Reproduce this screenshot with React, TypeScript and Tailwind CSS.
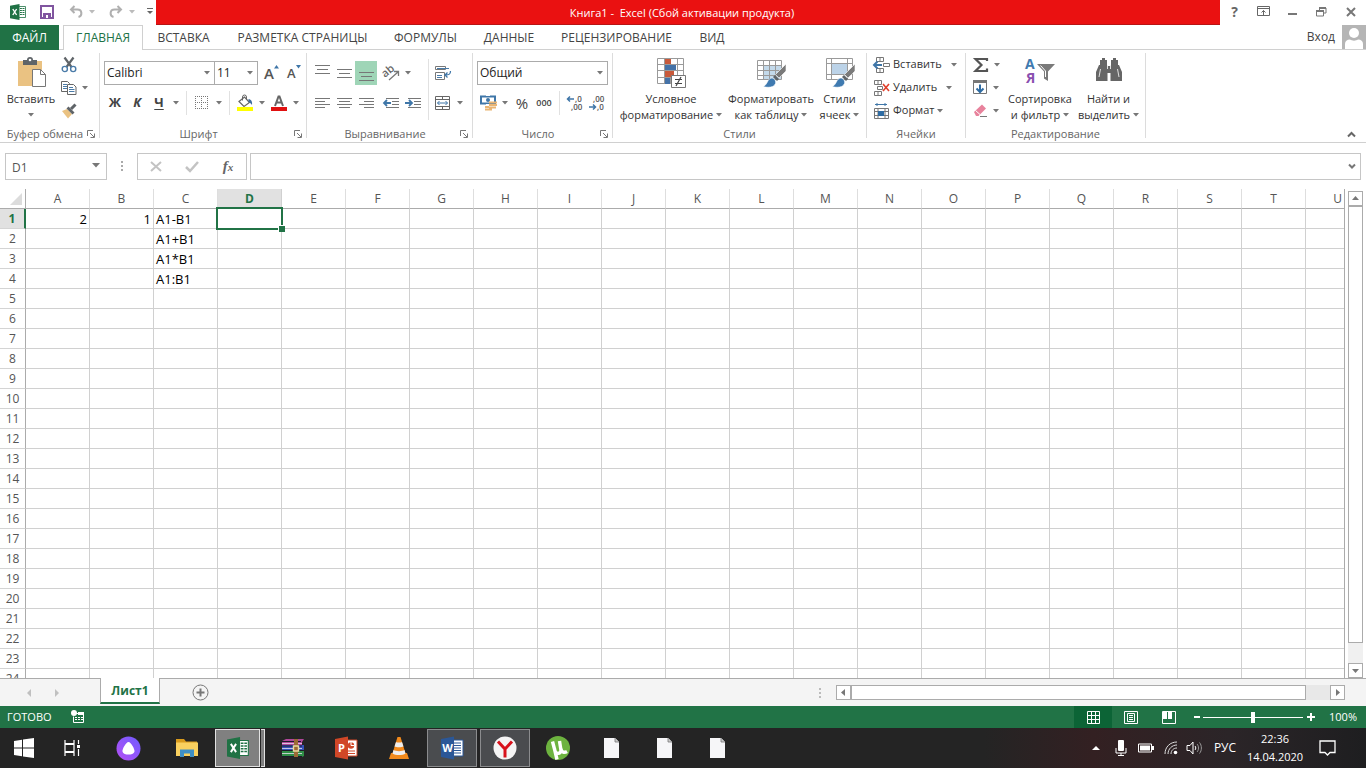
import { useState } from "react";
import type { ReactNode } from "react";

const COLUMNS = "ABCDEFGHIJKLMNOPQRSTU".split("");
const ROWS = Array.from({ length: 24 }, (_, i) => i + 1);

const CELLS: Record<string, string> = {
  A1: "2",
  B1: "1",
  C1: "A1-B1",
  C2: "A1+B1",
  C3: "A1*B1",
  C4: "A1:B1",
};

const TABS = [
  { name: "ВСТАВКА", width: "w-[81px]" },
  { name: "РАЗМЕТКА СТРАНИЦЫ", width: "w-[157px]" },
  { name: "ФОРМУЛЫ", width: "w-[89px]" },
  { name: "ДАННЫЕ", width: "w-[78px]" },
  { name: "РЕЦЕНЗИРОВАНИЕ", width: "w-[137px]" },
  { name: "ВИД", width: "w-[54px]" },
];

type IconProps = { w: number; h: number; children: ReactNode; className?: string };

const Icon = ({ w, h, children, className }: IconProps) => (
  <svg
    width={w}
    height={h}
    viewBox={`0 0 ${w} ${h}`}
    fill="none"
    aria-hidden="true"
    className={`shrink-0 overflow-visible ${className ?? ""}`}
  >
    {children}
  </svg>
);

const Caret = ({ className }: { className?: string }) => (
  <Icon w={6} h={4} className={className}>
    <path d="M0 0h6L3 3.5z" fill="#777" />
  </Icon>
);

const Arrow = ({ label }: { label: string }) => (
  <button aria-label={label} className="flex h-6 w-3 shrink-0 items-center justify-center">
    <Caret />
  </button>
);

type ToolProps = { label: string; children: ReactNode; active?: boolean };

const Tool = ({ label, children, active }: ToolProps) => (
  <button
    aria-label={label}
    className={`flex h-6 w-[22px] shrink-0 items-center justify-center ${active ? "bg-[#9fd5b7]" : ""}`}
  >
    {children}
  </button>
);

const Separator = () => <span className="mx-1 h-6 w-px shrink-0 bg-[#e1e1e1]" />;

type GroupProps = { title: string; width: string; launcher?: boolean; children: ReactNode };

const Group = ({ title, width, launcher, children }: GroupProps) => (
  <section className={`flex shrink-0 ${width}`}>
    <div className="flex min-w-0 flex-1 flex-col">
      <div className="flex h-[73px] px-1">{children}</div>
      <div className="flex h-4 items-center px-[3px] text-[#666]">
        <span className="flex-1 text-center text-[11px] leading-4 whitespace-nowrap">{title}</span>
        {launcher && (
          <button aria-label={`${title}: параметры`} className="mr-px">
            <Icon w={8} h={8}>
              <path d="M.5 6V.5H6M3 3l4 4M7.5 3.500v4h-4" stroke="#777" />
            </Icon>
          </button>
        )}
      </div>
    </div>
    <span className="h-[85px] w-px bg-[#dcdcdc]" />
  </section>
);

/* ---------- ribbon icons ---------- */

const Lines = ({ rows }: { rows: number[][] }) => (
  <Icon w={15} h={16}>
    {rows.map(([x, y, len]) => (
      <path key={y} d={`M${x} ${y}.5h${len}`} stroke="#777" />
    ))}
  </Icon>
);

const PasteIcon = () => (
  <Icon w={30} h={31}>
    <path d="M2 4h24v25H2z" fill="#eac282" />
    <path d="M7 3h4a3 3 0 0 1 6 0h4v5H7z" fill="#5f6468" />
    <circle cx="14" cy="3" r="1.300" fill="#fff" />
    <path d="M16.500 12.500h8l5 5v12h-13z" fill="#fff" stroke="#777" />
    <path d="M24.500 12.500v5h5" stroke="#777" />
  </Icon>
);

const CutIcon = () => (
  <Icon w={16} h={16}>
    <path d="M3.500 0.500 10.500 10M12.500 .5 5.500 10" stroke="#5f6468" strokeWidth="2.200" />
    <circle cx="3.800" cy="12" r="2.600" stroke="#4a7ba8" strokeWidth="1.400" />
    <circle cx="12.200" cy="12" r="2.600" stroke="#4a7ba8" strokeWidth="1.400" />
  </Icon>
);

const CopyIcon = () => (
  <Icon w={16} h={16}>
    <path d="M.5 1.500h6l2 2v8h-8z" fill="#fff" stroke="#666" />
    <path d="M2 4.500h4M2 6.500h4M2 8.500h4" stroke="#4a7ba8" />
    <path d="M6.500 4.500h6l2.500 2.500v7.500h-8.500z" fill="#fff" stroke="#666" />
    <path d="M8 7.500h4M8 9.500h5.500M8 11.500h5.500" stroke="#4a7ba8" />
  </Icon>
);

const PainterIcon = () => (
  <Icon w={16} h={16}>
    <path d="m1 8 5-2 5 5-4 4.500z" fill="#eac282" />
    <path d="m5.500 5.500 2-2 6 6-2 2z" fill="#5f6468" />
    <path d="m10 6 4.500-4.500" stroke="#5f6468" strokeWidth="3" />
  </Icon>
);

const BordersIcon = () => (
  <Icon w={14} h={14}>
    <path d="M.5 0v13M6.500 0v13M12.500 0v13M0 .5h13M0 6.500h13" stroke="#777" strokeDasharray="1 1" />
    <path d="M0 12.500h13" stroke="#777" strokeDasharray="1 1" />
  </Icon>
);

const FillIcon = () => (
  <Icon w={18} h={18}>
    <path d="M3 7.500 8.500 3l5 5.500L8 12.500z" fill="#fff" stroke="#666" strokeWidth="1.200" />
    <path d="M6.500 6.500V3a2 2 0 0 1 4 0v3" stroke="#666" />
    <path d="M12.500 5c3 .5 4 3 3.500 6-1-1.500-2-2.500-3.500-3z" fill="#3f6d9e" />
    <path d="M1 13h16v4H1z" fill="#ffff00" />
  </Icon>
);

const FontColorIcon = () => (
  <Icon w={16} h={18}>
    <path d="m4 12 3.500-9.500h1L12 12M5.500 8.500h5" stroke="#666" strokeWidth="2" />
    <path d="M0 13h16v4H0z" fill="#e01010" />
  </Icon>
);

const OrientIcon = () => (
  <Icon w={18} h={16}>
    <text
      x="3"
      y="13"
      fontSize="11"
      fontWeight="600"
      fill="#666"
      transform="rotate(-40 3 13)"
      fontFamily="Open Sans, sans-serif"
    >
      ab
    </text>
    <path d="m7 15 9-8M12 6.500h4.500V11" stroke="#777" strokeWidth="1.300" />
  </Icon>
);

const IndentIcon = ({ right }: { right?: boolean }) => (
  <Icon w={17} h={12}>
    <path d="M3 1.500h13M9 4.500h7M9 7.500h7M3 10.500h13" stroke="#777" />
    <path
      d={right ? "M0 6h7M4 3l3 3-3 3" : "M1 6h7M4 3 1 6l3 3"}
      stroke="#3f76a8"
      strokeWidth="1.800"
    />
  </Icon>
);

const WrapIcon = () => (
  <Icon w={17} h={16}>
    <path d="M.5 1.500h10v3H.5zM.5 7.500h9v7h-9z" stroke="#777" />
    <path d="M2 3.500h12M2 10.500h5M2 12.500h5" stroke="#4a7ba8" />
    <path d="M15.500 6c0 3-1 4-5 4M12.500 7.500 10 10l2.500 2.500" stroke="#3f76a8" strokeWidth="1.300" />
  </Icon>
);

const MergeIcon = () => (
  <Icon w={16} h={15}>
    <path d="M.5.5h14v13H.5zM.5 3.500h14M.5 10.500h14M7.500.5v3M7.500 10.500v3" stroke="#666" />
    <path d="M2.500 7h10M4.500 5l-2 2 2 2M10.500 5l2 2-2 2" stroke="#3f76a8" />
  </Icon>
);

const CurrencyIcon = () => (
  <Icon w={17} h={16}>
    <path d="M1 1.500h14v7H1z" fill="#fff" stroke="#3f76a8" strokeWidth="2" />
    <path d="M6 0h4v1H6zM6 9h4v1H6z" fill="#fff" />
    <circle cx="8" cy="5" r="2" fill="#3f76a8" />
    <path d="M9 7.500h8M9 10h8M9 12.500h7M5 12h4M5 14.500h7" stroke="#eab573" strokeWidth="1.800" />
  </Icon>
);

const DecimalIcon = ({ less }: { less?: boolean }) => (
  <Icon w={18} h={16}>
    <g fill="#555" fontSize="8" fontWeight="600" fontFamily="Open Sans, sans-serif">
      <text x={less ? 5 : 9} y="7">{less ? ",00" : ",0"}</text>
      <text x={less ? 9 : 5} y="15">{less ? ",0" : ",00"}</text>
    </g>
    {less ? (
      <path d="M1 12h6M5 9.500 7.500 12 5 14.500" stroke="#3f76a8" strokeWidth="1.500" />
    ) : (
      <path d="M2 4h6M4 1.500 1.500 4 4 6.500" stroke="#3f76a8" strokeWidth="1.500" />
    )}
  </Icon>
);

const ConditionalIcon = () => (
  <Icon w={32} h={32}>
    <path
      d="M2.500 1.500h26v25h-26zM2.500 7.500h26M2.500 13.500h26M2.500 20.500h26M9.500 1.500v25M15.500 1.500v25M22.500 1.500v25"
      stroke="#9a9a9a"
    />
    <path d="M10 2h6v5h-6zM10 14h9v6h-9z" fill="#c8593a" />
    <path d="M10 8h11v5H10zM10 21h5v6h-5z" fill="#4472a8" />
    <path d="M16.500 18.500h14v12h-14z" fill="#fff" stroke="#777" />
    <path d="M20 22.500h7M20 26.500h7M26 20l-5 9" stroke="#444" strokeWidth="1.200" />
  </Icon>
);

const Brush = () => (
  <>
    <path d="M31 7v7l-7 7-3.500-3.500z" fill="#7a7a7a" stroke="#fff" strokeWidth=".6" />
    <path d="m20 18 4 4-2 2-4-4z" fill="#5f6468" />
    <path
      d="M8 29.500c4-1 4-6 7-8 3-1.500 6.500 1.500 5.500 5-1.500 4-7.500 4.500-12.500 3z"
      fill="#3f7ab0"
      stroke="#fff"
      strokeWidth=".6"
    />
  </>
);

const FormatTableIcon = () => (
  <Icon w={32} h={32}>
    <path d="M8 9h18v13H8z" fill="#c3d9ea" />
    <path
      d="M2.500 3.500h24v19h-24zM2.500 8.500h24M2.500 13.500h24M2.500 18.500h24M8.500 3.500v19M14.500 3.500v19M20.500 3.500v19"
      stroke="#9a9a9a"
    />
    <Brush />
  </Icon>
);

const CellStylesIcon = () => (
  <Icon w={32} h={32}>
    <path d="M2.500 1.500h26v21h-26zM2.500 6.500h26M2.500 17.500h26M7.500 1.500v21M23.500 1.500v21" stroke="#9a9a9a" />
    <path d="M8 7h15v10H8z" fill="#bcd3e8" />
    <Brush />
  </Icon>
);

const InsertCellsIcon = () => (
  <Icon w={16} h={16}>
    <path d="M2.500.5h7v4h-7zM6 .5v4M2.500 11.500h7v4h-7zM6 11.500v4M9.500 6.500h6v3h-6z" stroke="#777" />
    <path d="M0 8h8M3.500 4.500 0 8l3.500 3.500" stroke="#3f76a8" strokeWidth="2" />
  </Icon>
);

const DeleteCellsIcon = () => (
  <Icon w={16} h={16}>
    <path d="M.5.5h7v4h-7zM4 .5v4M.5 11.500h7v4h-7zM4 11.500v4M3.500 6.500h5v3h-5z" stroke="#777" />
    <path d="m9 4 6 7M15 4l-6 7" stroke="#e0402c" strokeWidth="1.600" />
  </Icon>
);

const FormatCellsIcon = () => (
  <Icon w={16} h={16}>
    <path d="M1 1.500h12M3 0v3M11 0v3" stroke="#3f76a8" />
    <path d="M.5 5.500h14v10H.5zM.5 8.500h14M.5 12.500h14M4 5.500v10M11 5.500v10" stroke="#777" />
    <path d="M4 8h6v5H4z" fill="#2f6ca3" />
  </Icon>
);

const SumIcon = () => (
  <Icon w={16} h={16}>
    <path d="M14 4V2H2.500L8.500 8l-6 6H14v-2.500" stroke="#555" strokeWidth="2.200" />
  </Icon>
);

const FillDownIcon = () => (
  <Icon w={15} h={15}>
    <path d="M.5.5h13v13H.5z" stroke="#777" />
    <path d="M0 0h14v3H0z" fill="#777" />
    <path d="M7 4.500V12M3.500 8.500 7 12l3.500-3.500" stroke="#2f6ca3" strokeWidth="2" />
  </Icon>
);

const EraserIcon = () => (
  <Icon w={15} h={15}>
    <path d="m1 9 8-7.500 4 4-7.500 7.500H3z" fill="#e8829c" />
    <path d="M2.500 7.500l4.500 4" stroke="#fff" />
    <path d="M7 13.500h7" stroke="#777" />
  </Icon>
);

const SortFilterIcon = () => (
  <Icon w={30} h={28}>
    <g fontSize="14" fontWeight="700" fontFamily="Open Sans, sans-serif">
      <text x="0" y="12" fill="#3f7ab0">А</text>
      <text x="1" y="26" fill="#8a4fb0">Я</text>
    </g>
    <path d="M12 7h18l-7 7.500V24l-4-2.500v-7z" fill="#7a7a7a" />
    <path d="m15.500 8.500 5 5.500v6" stroke="#fff" />
  </Icon>
);

const BinocularsIcon = () => (
  <Icon w={28} h={26}>
    <path
      d="M5 3h2V1h3v2h2v8H5zM16 3h2V1h3v2h2v8h-7zM4 8h8.500v16H1V15zM15.500 8H24l3 7v9H15.500zM11 9h6v7h-6z"
      fill="#666"
    />
    <path d="M5.500 12 4 20M22.500 12l1.500 8M12.500 4v8M15.500 4v8" stroke="#fff" strokeWidth=".8" />
  </Icon>
);

/* ---------- app icons ---------- */

const ExcelIcon = ({ size }: { size: number }) => (
  <svg width={size} height={size} viewBox="0 0 16 16" fill="none" aria-hidden="true" className="shrink-0">
    <path d="M8.500 2.500h7v11h-7z" fill="#fff" stroke="#207245" strokeWidth=".8" />
    <path d="M10 4.500h4.500M10 6.500h4.500M10 8.500h4.500M10 10.500h4.500" stroke="#207245" strokeWidth="1" />
    <path d="M12.300 3v10" stroke="#fff" strokeWidth=".6" />
    <path d="M0 1.800 9.500 0v16L0 14.200z" fill="#207245" />
    <path d="m2.800 5 3.800 6M6.600 5l-3.800 6" stroke="#fff" strokeWidth="1.400" />
  </svg>
);

const OfficeIcon = ({ color, letter }: { color: string; letter: string }) => (
  <Icon w={24} h={24}>
    <path d="M12 4h11v16H12z" fill="#fff" stroke={color} />
    {letter === "W" ? (
      <path d="M14 7h7M14 9.500h7M14 12h7M14 14.500h7M14 17h7" stroke={color} strokeWidth="1.200" />
    ) : (
      <>
        <circle cx="17" cy="9.500" r="3.200" fill={color} />
        <path d="M17 9.500V6M17 9.500h3.500" stroke="#fff" />
        <path d="M14 15h7M14 17.500h7" stroke={color} strokeWidth="1.200" />
      </>
    )}
    <path d="M1 3 14 .5v23L1 21z" fill={color} />
    <text
      x="7.500"
      y="16"
      textAnchor="middle"
      fontSize="11"
      fontWeight="700"
      fill="#fff"
      fontFamily="Open Sans, sans-serif"
    >
      {letter}
    </text>
  </Icon>
);

const WinRarIcon = () => (
  <Icon w={24} h={20}>
    <path d="M1 3 5 1h18l-2 3v4H1z" fill="#b0479a" />
    <path d="M1 7h22v5H1z" fill="#3552b8" />
    <path d="M1 13h22v5l-2 1H1z" fill="#2f8f46" />
    <path d="M1 3.500h19M1 8h20M1 12.500h21M1 18.500h20" stroke="#1b1b2b" />
    <path d="M1 5.500h20M1 10.500h20M1 15.500h20" stroke="#e6dff0" strokeWidth=".8" />
    <path d="M13 1h4v18h-4z" fill="#9b6a35" />
    <path d="M12.500 8h5v5h-5z" stroke="#e8d9a0" strokeWidth="1.400" />
  </Icon>
);

const VlcIcon = () => (
  <Icon w={22} h={24}>
    <path d="M3 17h16l2 6H1z" fill="#f28a1c" />
    <path d="M9.500 1h3L18 19c-3 2.500-11 2.500-14 0z" fill="#f28a1c" />
    <path
      d="m8 6-1.500 4.500c2 1 7 1 9 0L14 6c-1 .8-5 .8-6 0zM5.500 14l-1 3.500c3 2 10 2 13 0l-1-3.500c-2 1.500-9 1.500-11 0z"
      fill="#eee"
    />
  </Icon>
);

const YandexIcon = () => (
  <Icon w={24} h={24}>
    <circle cx="12" cy="12" r="11.500" fill="#f4f4f4" />
    <path d="m5 5.500 7 7.500 7-7.500M12 12.500V21.500" stroke="#d8121c" strokeWidth="3" />
  </Icon>
);

const TorrentIcon = () => (
  <Icon w={26} h={26}>
    <circle cx="13" cy="13" r="12" fill="#6db33f" />
    <path
      d="M7.500 6.500 10 16c1 3.500 5.500 3 6-.5L14.500 6M16 14c.5 3.500 3.500 4 6 2.500M9.500 14l2.500 10.500"
      stroke="#fff"
      strokeWidth="3.400"
    />
  </Icon>
);

const ExplorerIcon = () => (
  <Icon w={24} h={20}>
    <path d="M1 1h8l2 2.500h11V6H1z" fill="#d99b1c" />
    <path d="M1 4.500h22V18H1z" fill="#fad15f" />
    <path d="M5 19v-7.500h14V19h-4v-3.500H9V19z" fill="#3f8fc4" />
  </Icon>
);

const AliceIcon = () => (
  <Icon w={25} h={25}>
    <defs>
      <linearGradient id="alice" x1="0" y1="1" x2="1" y2="0">
        <stop offset="0" stopColor="#b44ff5" />
        <stop offset="1" stopColor="#6f5cff" />
      </linearGradient>
    </defs>
    <circle cx="12.500" cy="12.500" r="12" fill="url(#alice)" />
    <path
      d="M12.500 6c2.500 0 6.500 7.500 6 9.500-.6 2.500-3.500 3-6 3s-5.400-.5-6-3C6 13.500 10 6 12.500 6z"
      fill="#fff"
    />
  </Icon>
);

const FileIcon = () => (
  <Icon w={17} h={22}>
    <path d="M1 1h11l4 4v16H1z" fill="#f6f6f8" />
    <path d="M12 1v4h4" fill="#ccc" stroke="#777" strokeWidth=".8" />
  </Icon>
);

const TASKS = [
  { name: "Excel", icon: <ExcelIcon size={22} />, style: "border border-[#e2e2e2] bg-[#808080]" },
  { name: "WinRAR", icon: <WinRarIcon />, style: "" },
  { name: "PowerPoint", icon: <OfficeIcon color="#d04727" letter="P" />, style: "" },
  { name: "VLC", icon: <VlcIcon />, style: "" },
  { name: "Word", icon: <OfficeIcon color="#2b5797" letter="W" />, style: "border border-[#8b8c8e] bg-[#4a4c4f]" },
  { name: "Yandex", icon: <YandexIcon />, style: "border border-[#8b8c8e] bg-[#4a4c4f]" },
  { name: "uTorrent", icon: <TorrentIcon />, style: "" },
  { name: "Файл 1", icon: <FileIcon />, style: "" },
  { name: "Файл 2", icon: <FileIcon />, style: "" },
  { name: "Файл 3", icon: <FileIcon />, style: "" },
];

/* ---------- sections ---------- */

const TitleBar = () => (
  <header className="flex h-[25px] shrink-0">
    <div className="flex w-[156px] shrink-0 items-center pb-[2px] pl-[10px]">
      <ExcelIcon size={16} />
      <button aria-label="Сохранить" className="ml-[14px]">
        <Icon w={14} h={14}>
          <path d="M1 1h12v12H1z" stroke="#80559f" strokeWidth="2" />
          <path d="M3 8h8v5H3z" fill="#80559f" />
          <path d="M6 10h2v3H6z" fill="#fff" />
        </Icon>
      </button>
      <button aria-label="Отменить" className="ml-[15px] flex items-center gap-[6px]">
        <Icon w={14} h={13}>
          <path d="M5.500 1 2 4.500 5.500 8M2 4.500h6.500c5 0 5 6.500 1 7.500" stroke="#b0b0b0" strokeWidth="2" />
        </Icon>
        <Caret className="opacity-50" />
      </button>
      <button aria-label="Вернуть" className="ml-[14px] flex items-center gap-[6px]">
        <Icon w={14} h={13}>
          <path d="M8.500 1 12 4.500 8.500 8M12 4.500H5.500c-5 0-5 6.500-1 7.500" stroke="#b0b0b0" strokeWidth="2" />
        </Icon>
        <Caret className="opacity-50" />
      </button>
      <button aria-label="Настройка панели" className="ml-3">
        <Icon w={6} h={7}>
          <path d="M0 .5h6" stroke="#666" />
          <path d="M0 3h6L3 6z" fill="#666" />
        </Icon>
      </button>
    </div>
    <h1 className="flex-1 border-b border-[#b81414] bg-[#ea1111] pr-3 text-center text-[11px] leading-[25px] whitespace-pre text-white">
      {"Книга1 -  Excel (Сбой активации продукта)"}
    </h1>
    <div className="flex w-[146px] shrink-0 items-center pb-[2px]">
      <button aria-label="Справка" className="w-[29px] text-[14px] font-bold text-[#666]">
        ?
      </button>
      <button aria-label="Параметры ленты" className="flex w-[29px] justify-center">
        <Icon w={14} h={11}>
          <path d="M.5.5h12v9H.5zM.5 2.500h12M6.500 9V4.500M4.500 6.500l2-2 2 2" stroke="#666" />
        </Icon>
      </button>
      <button aria-label="Свернуть" className="flex w-[29px] justify-center pt-1">
        <Icon w={9} h={2}>
          <path d="M0 1h9" stroke="#777" strokeWidth="2" />
        </Icon>
      </button>
      <button aria-label="Восстановить" className="flex w-[29px] justify-center">
        <Icon w={11} h={10}>
          <path d="M3.500 3V1h6.500v5H8" stroke="#777" />
          <path d="M.5 4h7v5h-7z" stroke="#777" />
          <path d="M0 4h8M3 1h7" stroke="#777" strokeWidth="2" />
        </Icon>
      </button>
      <button aria-label="Закрыть" className="flex w-[29px] justify-center">
        <Icon w={10} h={10}>
          <path d="m1 1 8 8M9 1 1 9" stroke="#777" strokeWidth="2" />
        </Icon>
      </button>
    </div>
  </header>
);

const RibbonTabs = () => (
  <nav className="flex h-[25px] shrink-0 border-b border-[#d0d0d0] text-[12px] text-[#444]">
    <button className="h-[25px] w-[59px] shrink-0 bg-[#207245] text-white">ФАЙЛ</button>
    <button className="ml-1 h-[25px] w-20 shrink-0 border border-b-0 border-[#d0d0d0] bg-white text-[#207245]">
      ГЛАВНАЯ
    </button>
    {TABS.map((tab) => (
      <button key={tab.name} className={`h-[25px] shrink-0 whitespace-nowrap ${tab.width}`}>
        {tab.name}
      </button>
    ))}
    <div className="flex-1" />
    <a href="#login" className="mr-[7px] text-[12px] leading-6">
      Вход
    </a>
    <Icon w={24} h={24}>
      <path d="M0 0h24v24H0z" fill="#b5b5b5" />
      <circle cx="12" cy="8" r="5" fill="#fff" />
      <path d="M3 24v-5c0-3 2-4.500 5-4.500 2 1.500 6 1.500 8 0 3 0 5 1.500 5 4.500v5z" fill="#fff" />
    </Icon>
  </nav>
);

type BigToolProps = { width: string; icon: ReactNode; lines: string[] };

const BigTool = ({ width, icon, lines }: BigToolProps) => (
  <button className={`flex shrink-0 flex-col items-center pt-1 text-[11px] leading-4 text-[#333] ${width}`}>
    <span className="flex h-[34px] shrink-0">{icon}</span>
    <span className="whitespace-nowrap">{lines[0]}</span>
    <span className="flex h-4 items-center gap-[3px] whitespace-nowrap">
      {lines[1]}
      <Caret />
    </span>
  </button>
);

const CELL_TOOLS = [
  { name: "Вставить", icon: <InsertCellsIcon />, gap: "gap-[9px]" },
  { name: "Удалить", icon: <DeleteCellsIcon />, gap: "gap-[9px]" },
  { name: "Формат", icon: <FormatCellsIcon />, gap: "gap-[3px]" },
];

const EDIT_TOOLS = [
  { name: "Сумма", icon: <SumIcon /> },
  { name: "Заполнить", icon: <FillDownIcon /> },
  { name: "Очистить", icon: <EraserIcon /> },
];

const Ribbon = () => (
  <div className="flex h-[93px] shrink-0 border-b border-[#d0d0d0] pt-[3px]">
    <Group title="Буфер обмена" width="w-[100px]" launcher>
      <BigTool width="w-[54px]" icon={<PasteIcon />} lines={["Вставить", ""]} />
      <div className="flex flex-col pl-[3px]">
        <button aria-label="Вырезать" className="flex h-[23px] items-center">
          <CutIcon />
        </button>
        <button aria-label="Копировать" className="flex h-[23px] items-center gap-[5px]">
          <CopyIcon />
          <Caret />
        </button>
        <button aria-label="Формат по образцу" className="flex h-[23px] items-center">
          <PainterIcon />
        </button>
      </div>
    </Group>

    <Group title="Шрифт" width="w-[207px]" launcher>
      <div className="flex flex-col gap-[6px] pt-2">
        <div className="flex items-center text-[12px] text-[#222]">
          <label className="relative h-6 w-[111px] border border-[#ababab]">
            <select aria-label="Шрифт" className="h-full w-full appearance-none pl-[2px] leading-5">
              <option>Calibri</option>
            </select>
            <Caret className="pointer-events-none absolute top-[9px] right-1" />
          </label>
          <label className="relative h-6 w-[43px] border border-l-0 border-[#ababab]">
            <select aria-label="Размер" className="h-full w-full appearance-none pl-[2px] leading-5">
              <option>11</option>
            </select>
            <Caret className="pointer-events-none absolute top-[9px] right-1" />
          </label>
          <button aria-label="Увеличить" className="ml-[6px] flex w-[23px] items-start text-[#555]">
            <span className="text-[15px] leading-6 font-semibold">A</span>
            <Icon w={4} h={4} className="mt-1">
              <path d="M0 3.500h5L2.500 0z" fill="#3f76a8" />
            </Icon>
          </button>
          <button aria-label="Уменьшить" className="flex items-start text-[#555]">
            <span className="text-[13px] leading-6 font-semibold">A</span>
            <Icon w={4} h={4} className="mt-1">
              <path d="M0 0h5L2.500 3.500z" fill="#3f76a8" />
            </Icon>
          </button>
        </div>
        <div className="flex items-center text-[13px] font-bold text-[#444]">
          <Tool label="Полужирный">Ж</Tool>
          <Tool label="Курсив">
            <i>К</i>
          </Tool>
          <Tool label="Подчеркнутый">
            <u className="underline-offset-2">Ч</u>
          </Tool>
          <Arrow label="Варианты подчеркивания" />
          <Separator />
          <Tool label="Границы">
            <BordersIcon />
          </Tool>
          <Arrow label="Варианты границ" />
          <Separator />
          <Tool label="Цвет заливки">
            <FillIcon />
          </Tool>
          <Arrow label="Варианты заливки" />
          <Tool label="Цвет текста">
            <FontColorIcon />
          </Tool>
          <Arrow label="Варианты цвета" />
        </div>
      </div>
    </Group>

    <Group title="Выравнивание" width="w-[166px]" launcher>
      <div className="flex w-[114px] flex-col gap-[6px] pt-2">
        <div className="flex">
          <Tool label="По верхнему краю">
            <Lines rows={[[0, 0, 15], [2, 4, 11], [0, 8, 15]]} />
          </Tool>
          <Tool label="По середине">
            <Lines rows={[[0, 4, 15], [2, 8, 11], [0, 12, 15]]} />
          </Tool>
          <Tool label="По нижнему краю" active>
            <Lines rows={[[0, 7, 15], [2, 11, 11], [0, 15, 15]]} />
          </Tool>
          <span className="w-[3px]" />
          <Tool label="Ориентация">
            <OrientIcon />
          </Tool>
          <Arrow label="Варианты ориентации" />
        </div>
        <div className="flex">
          <Tool label="По левому краю">
            <Lines rows={[[0, 3, 15], [0, 6, 10], [0, 9, 15], [0, 12, 10]]} />
          </Tool>
          <Tool label="По центру">
            <Lines rows={[[0, 3, 15], [2, 6, 11], [0, 9, 15], [2, 12, 11]]} />
          </Tool>
          <Tool label="По правому краю">
            <Lines rows={[[0, 3, 15], [5, 6, 10], [0, 9, 15], [5, 12, 10]]} />
          </Tool>
          <span className="w-[3px]" />
          <Tool label="Уменьшить отступ">
            <IndentIcon />
          </Tool>
          <Tool label="Увеличить отступ">
            <IndentIcon right />
          </Tool>
        </div>
      </div>
      <div className="my-[6px] ml-[3px] flex flex-col gap-[6px] border-l border-[#e1e1e1] pt-[2px] pl-[3px]">
        <Tool label="Перенос текста">
          <WrapIcon />
        </Tool>
        <div className="flex">
          <Tool label="Объединить">
            <MergeIcon />
          </Tool>
          <Arrow label="Варианты объединения" />
        </div>
      </div>
    </Group>

    <Group title="Число" width="w-[140px]" launcher>
      <div className="flex flex-1 flex-col gap-[6px] pt-2">
        <label className="relative h-6 border border-[#ababab] text-[12px] text-[#222]">
          <select aria-label="Числовой формат" className="h-full w-full appearance-none pl-[2px] leading-5">
            <option>Общий</option>
          </select>
          <Caret className="pointer-events-none absolute top-[9px] right-1" />
        </label>
        <div className="flex items-center text-[#444]">
          <Tool label="Финансовый формат">
            <CurrencyIcon />
          </Tool>
          <Arrow label="Варианты валюты" />
          <Tool label="Процентный формат">
            <span className="text-[15px]">%</span>
          </Tool>
          <Tool label="Формат с разделителями">
            <span className="text-[9px] font-semibold">000</span>
          </Tool>
          <Separator />
          <Tool label="Увеличить разрядность">
            <DecimalIcon />
          </Tool>
          <Tool label="Уменьшить разрядность">
            <DecimalIcon less />
          </Tool>
        </div>
      </div>
    </Group>

    <Group title="Стили" width="w-[254px]">
      <BigTool width="w-[108px]" icon={<ConditionalIcon />} lines={["Условное", "форматирование"]} />
      <BigTool width="w-[92px]" icon={<FormatTableIcon />} lines={["Форматировать", "как таблицу"]} />
      <BigTool width="w-[45px]" icon={<CellStylesIcon />} lines={["Стили", "ячеек"]} />
    </Group>

    <Group title="Ячейки" width="w-[99px]">
      <div className="flex flex-col pl-[3px] text-[11px] text-[#333]">
        {CELL_TOOLS.map((tool) => (
          <button key={tool.name} className={`flex h-[23px] items-center ${tool.gap}`}>
            <span className="flex items-center gap-[3px]">
              {tool.icon}
              {tool.name}
            </span>
            <Caret />
          </button>
        ))}
      </div>
    </Group>

    <Group title="Редактирование" width="w-[180px]">
      <div className="flex w-[34px] flex-col pl-[3px]">
        {EDIT_TOOLS.map((tool) => (
          <button key={tool.name} aria-label={tool.name} className="flex h-[23px] items-center gap-[5px]">
            {tool.icon}
            <Caret />
          </button>
        ))}
      </div>
      <BigTool width="w-[72px]" icon={<SortFilterIcon />} lines={["Сортировка", "и фильтр"]} />
      <BigTool width="w-[65px]" icon={<BinocularsIcon />} lines={["Найти и", "выделить"]} />
    </Group>

    <div className="flex flex-1 items-end justify-end pr-[10px] pb-1">
      <button aria-label="Свернуть ленту">
        <Icon w={9} h={7}>
          <path d="m1 5.500 3.500-3.500L8 5.500" stroke="#666" strokeWidth="2" />
        </Icon>
      </button>
    </div>
  </div>
);

const FormulaBar = () => {
  const [formula, setFormula] = useState("");

  return (
    <div className="flex h-[46px] shrink-0 items-center px-[5px]">
      <label className="relative h-[27px] w-[102px] shrink-0 border border-[#c6c6c6]">
        <input
          aria-label="Имя"
          defaultValue="D1"
          className="h-full w-full px-[6px] text-[12px] text-[#555] outline-none"
        />
        <Icon w={8} h={5} className="pointer-events-none absolute top-[9px] right-[6px]">
          <path d="M0 0h8L4 4.500z" fill="#777" />
        </Icon>
      </label>
      <Icon w={30} h={14}>
        <path d="M14 2h2v2h-2zM14 6h2v2h-2zM14 10h2v2h-2z" fill="#aaa" />
      </Icon>
      <div className="flex h-[27px] w-[110px] shrink-0 items-center border border-[#c6c6c6]">
        <button aria-label="Отмена" className="flex w-9 justify-center">
          <Icon w={12} h={11}>
            <path d="m1 1 10 9M11 1 1 10" stroke="#c3c3c3" strokeWidth="2" />
          </Icon>
        </button>
        <button aria-label="Ввод" className="flex w-9 justify-center">
          <Icon w={14} h={11}>
            <path d="m1 6 4 4 8-9" stroke="#c3c3c3" strokeWidth="2.500" />
          </Icon>
        </button>
        <button
          aria-label="Вставить функцию"
          className="w-9 font-['Liberation_Serif',serif] text-[15px] font-bold text-[#666] italic"
        >
          f<span className="text-[11px]">x</span>
        </button>
      </div>
      <div className="ml-[3px] flex h-[27px] flex-1 items-center border border-[#c6c6c6] pr-1">
        <input
          aria-label="Строка формул"
          value={formula}
          onChange={(e) => { setFormula(e.target.value); }}
          className="h-full flex-1 px-1 text-[13px] outline-none"
        />
        <button aria-label="Развернуть строку формул">
          <Icon w={8} h={7}>
            <path d="m1 1.500 3 3 3-3" stroke="#777" strokeWidth="2" />
          </Icon>
        </button>
      </div>
    </div>
  );
};

const Sheet = () => (
  <div className="min-w-0 flex-1 overflow-hidden border-r border-[#ababab]">
    <table className="w-[1370px] table-fixed border-separate border-spacing-0">
      <thead>
        <tr className="h-5 text-[12px] leading-[18px] text-[#555]">
          <th className="w-[26px] border-r border-b border-[#ababab] p-0">
            <Icon w={13} h={13} className="ml-[9px]">
              <path d="M13 1v12H1z" fill="#dcdcdc" />
            </Icon>
          </th>
          {COLUMNS.map((col) => (
            <th
              key={col}
              scope="col"
              className={
                col === "D"
                  ? "w-16 border-r border-b border-r-[#d0d0d0] border-b-[#217346] bg-[#e1e1e1] p-0 font-bold text-[#217346]"
                  : "w-16 border-r border-b border-r-[#dedede] border-b-[#ababab] p-0 font-normal"
              }
            >
              {col}
            </th>
          ))}
        </tr>
      </thead>
      <tbody>
        {ROWS.map((row) => (
          <tr key={row} className="h-5 text-[13px] leading-[18px] text-black">
            <th
              scope="row"
              className={
                row === 1
                  ? "border-r-2 border-b border-r-[#217346] border-b-[#d4d4d4] bg-[#e1e1e1] p-0 text-[12px] font-bold text-[#217346]"
                  : "border-r border-b border-r-[#ababab] border-b-[#d4d4d4] p-0 text-[12px] font-normal text-[#555]"
              }
            >
              {row}
            </th>
            {COLUMNS.map((col) => {
              const id = `${col}${row}`;
              const numeric = col === "A" || col === "B";
              return (
                <td
                  key={id}
                  className={`relative border-r border-b border-[#d0d0d0] px-[2px] py-0 ${numeric ? "text-right" : ""}`}
                >
                  {CELLS[id]}
                  {id === "D1" && (
                    <span className="absolute -inset-[2px] z-10 border-2 border-[#217346]">
                      <span className="absolute -right-1 -bottom-1 size-[7px] border-t border-l border-white bg-[#217346]" />
                    </span>
                  )}
                </td>
              );
            })}
          </tr>
        ))}
      </tbody>
    </table>
  </div>
);

const ScrollButton = ({ label, d }: { label: string; d: string }) => (
  <button
    aria-label={label}
    className="flex size-[15px] shrink-0 items-center justify-center border border-[#ababab] bg-white"
  >
    <Icon w={7} h={7}>
      <path d={d} fill="#777" />
    </Icon>
  </button>
);

const SheetTabs = () => (
  <div className="flex h-7 shrink-0 border-t border-[#ababab] bg-[#f4f4f4]">
    <div className="flex w-[100px] shrink-0 items-center gap-[23px] pl-[27px]">
      <button aria-label="Предыдущий лист">
        <Icon w={5} h={8}>
          <path d="M4 0v8L0 4z" fill="#c0c0c0" />
        </Icon>
      </button>
      <button aria-label="Следующий лист">
        <Icon w={5} h={8}>
          <path d="M0 0v8l4-4z" fill="#c0c0c0" />
        </Icon>
      </button>
    </div>
    <button className="-mt-px h-[26px] w-[60px] shrink-0 border-x border-b-2 border-x-[#ababab] border-b-[#217346] bg-white pt-[2px] text-[12px] font-bold text-[#217346]">
      Лист1
    </button>
    <button aria-label="Новый лист" className="ml-8 flex items-center">
      <Icon w={17} h={17}>
        <circle cx="8.500" cy="8.500" r="7.500" stroke="#777" />
        <path d="M8.500 4.500v8M4.500 8.500h8" stroke="#777" strokeWidth="2" />
      </Icon>
    </button>
    <div className="flex-1" />
    <div className="flex w-[548px] shrink-0 items-center pr-[21px]">
      <Icon w={18} h={12}>
        <path d="M1 1h2v2H1zM1 5h2v2H1zM1 9h2v2H1z" fill="#bbb" />
      </Icon>
      <ScrollButton label="Влево" d="M5 0v7L1 3.500z" />
      <div className="flex h-[15px] flex-1 bg-[#e8e8e8] pr-6">
        <div className="flex-1 border border-[#ababab] bg-white" />
      </div>
      <ScrollButton label="Вправо" d="M2 0v7l4-3.500z" />
    </div>
  </div>
);

const StatusBar = () => {
  const [zoom, setZoom] = useState(50);

  return (
    <footer className="flex h-[22px] shrink-0 items-center bg-[#217346] text-[11px] text-white">
      <span className="w-[71px] shrink-0 pl-[7px]">ГОТОВО</span>
      <Icon w={14} h={14}>
        <path d="M4.500 3.500h8v9h-10v-6" stroke="#fff" />
        <path d="M7 2h6v3H7zM4 7h2v1H4zM7 7h2v1H7zM10 7h2v1h-2zM4 9h2v1H4zM7 9h2v1H7zM10 9h2v1h-2z" fill="#fff" />
        <circle cx="3" cy="3" r="3" fill="#fff" />
      </Icon>
      <div className="flex-1" />
      <button aria-label="Обычный" className="flex h-full w-[38px] items-center justify-center bg-[#0c6436]">
        <Icon w={13} h={13}>
          <path d="M.5.5h12v12H.5zM.5 4.500h12M.5 8.500h12M4.500.5v12M8.500.5v12" stroke="#fff" />
        </Icon>
      </button>
      <button aria-label="Разметка страницы" className="flex h-full w-[38px] items-center justify-center">
        <Icon w={14} h={13}>
          <path d="M.5.5h13v12H.5zM3.500 2.500h7v8h-7zM5 4.500h4M5 6.500h4M5 8.500h4" stroke="#fff" />
        </Icon>
      </button>
      <button aria-label="Страничный" className="flex h-full w-[38px] items-center justify-center">
        <Icon w={14} h={13}>
          <path d="M.5.5h13v12H.5z" stroke="#fff" />
          <path d="M1 1h4v7H1zM6 1h4v7H6z" fill="#fff" />
        </Icon>
      </button>
      <button aria-label="Уменьшить масштаб" className="ml-[2px] flex w-[13px] justify-center">
        <Icon w={6} h={2}>
          <path d="M0 0h6v2H0z" fill="#fff" />
        </Icon>
      </button>
      <input
        type="range"
        aria-label="Масштаб"
        value={zoom}
        onChange={(e) => { setZoom(Number(e.target.value)); }}
        className="h-3 w-[100px] appearance-none bg-transparent [&::-webkit-slider-runnable-track]:h-px [&::-webkit-slider-runnable-track]:bg-white [&::-webkit-slider-thumb]:-mt-[5px] [&::-webkit-slider-thumb]:h-[11px] [&::-webkit-slider-thumb]:w-1 [&::-webkit-slider-thumb]:appearance-none [&::-webkit-slider-thumb]:bg-white"
      />
      <button aria-label="Увеличить масштаб" className="flex w-4 justify-center">
        <Icon w={8} h={8}>
          <path d="M4 0v8M0 4h8" stroke="#fff" strokeWidth="2" />
        </Icon>
      </button>
      <span className="w-[47px] shrink-0 pr-[9px] text-right">100%</span>
    </footer>
  );
};

const Taskbar = () => (
  <div className="flex h-10 shrink-0 items-center bg-[linear-gradient(90deg,#242424_72%,#332022_80%,#2b2528_90%,#1e1e20_100%)] text-white">
    <button aria-label="Пуск" className="flex w-12 justify-center">
      <Icon w={20} h={20}>
        <path d="M0 3l8-1.200V9.500H0zM9 1.600 20 0v9.500H9zM0 10.500h8v7.700L0 17zM9 10.500h11V20L9 18.400z" fill="#fff" />
      </Icon>
    </button>
    <button aria-label="Представление задач" className="flex w-12 justify-center">
      <Icon w={17} h={16}>
        <path
          d="M1 0v3.500h9V0M1 16v-3.500h9V16M1 4.500h9v7H1zM14.500 0v4M14.500 9v7"
          stroke="#fff"
          strokeWidth="1.200"
        />
        <path d="M13 5h3v3h-3z" fill="#fff" />
      </Icon>
    </button>
    <button aria-label="Алиса" className="ml-[7px] flex w-[50px] justify-center">
      <AliceIcon />
    </button>
    <button aria-label="Проводник" className="ml-[9px] flex w-[50px] justify-center">
      <ExplorerIcon />
    </button>
    <div className="ml-[3px] flex gap-[3px]">
      {TASKS.map((task, i) => (
        <div key={task.name} className="flex w-[50px]">
          <button
            aria-label={task.name}
            className={`flex h-[38px] flex-1 items-center justify-center ${task.style}`}
          >
            {task.icon}
          </button>
          {i === 0 && <span className="ml-px w-1 border border-l-0 border-[#e2e2e2] bg-[#808080]" />}
        </div>
      ))}
    </div>
    <div className="flex-1" />
    <div className="flex shrink-0 items-center">
      <button aria-label="Скрытые значки" className="flex w-6 justify-center">
        <Icon w={8} h={4}>
          <path d="M0 4h8L4 0z" fill="#fff" />
        </Icon>
      </button>
      <Icon w={12} h={18} className="ml-[7px]">
        <rect x="3" y="1" width="6" height="11" rx="1" fill="#fff" />
        <path d="M1 9v5h10V9M6 14v2M3 16.500h6" stroke="#fff" />
      </Icon>
      <Icon w={16} h={10} className="ml-[11px]">
        <path d="M.5 1h13v8H.5z" stroke="#fff" />
        <path d="M2 2.500h10v5H2zM14 3h2v4h-2z" fill="#fff" />
      </Icon>
      <Icon w={14} h={14} className="ml-[10px]">
        <path d="M1 13C1 6 6 1 13 1M4 13c0-5 4-9 9-9M7 13c0-3.500 2.500-6 6-6" stroke="#ddd" />
        <circle cx="11.500" cy="11.500" r="1.800" fill="#fff" />
      </Icon>
      <Icon w={17} h={14} className="ml-2">
        <path d="M1 4.500h3l3-3.500v12l-3-3.500H1z" stroke="#fff" />
        <path d="M9 5c1 1 1 3 0 4" stroke="#fff" />
        <path d="M11 3c2 2 2 6 0 8M13.500 1.500c2.500 3 2.500 8 0 11" stroke="#999" />
      </Icon>
      <button className="w-[44px] text-[12px]">РУС</button>
      <div className="w-[56px] text-center text-[11px] leading-[18px]">
        <div>22:36</div>
        <div>14.04.2020</div>
      </div>
      <button aria-label="Уведомления" className="mr-[13px] flex w-[50px] justify-center">
        <Icon w={18} h={17}>
          <path d="M1 1h15v11.500h-5L8.500 15 6 12.500H1z" stroke="#fff" strokeWidth="1.300" />
        </Icon>
      </button>
    </div>
  </div>
);

const App = () => (
  <div className="flex h-screen flex-col overflow-hidden bg-white font-['Open_Sans','Noto_Sans',sans-serif]">
    <TitleBar />
    <RibbonTabs />
    <Ribbon />
    <FormulaBar />
    <main className="flex min-h-0 flex-1">
      <Sheet />
      <div className="flex w-[21px] shrink-0 flex-col items-center pt-[2px]">
        <ScrollButton label="Вверх" d="M0 5h7L3.500 1z" />
        <div className="flex w-[15px] flex-1 flex-col bg-[#f0f0f0] pb-5">
          <div className="flex-1 border border-[#ababab] bg-white" />
        </div>
        <ScrollButton label="Вниз" d="M0 2h7L3.500 6z" />
      </div>
    </main>
    <SheetTabs />
    <StatusBar />
    <Taskbar />
  </div>
);

export default App;
